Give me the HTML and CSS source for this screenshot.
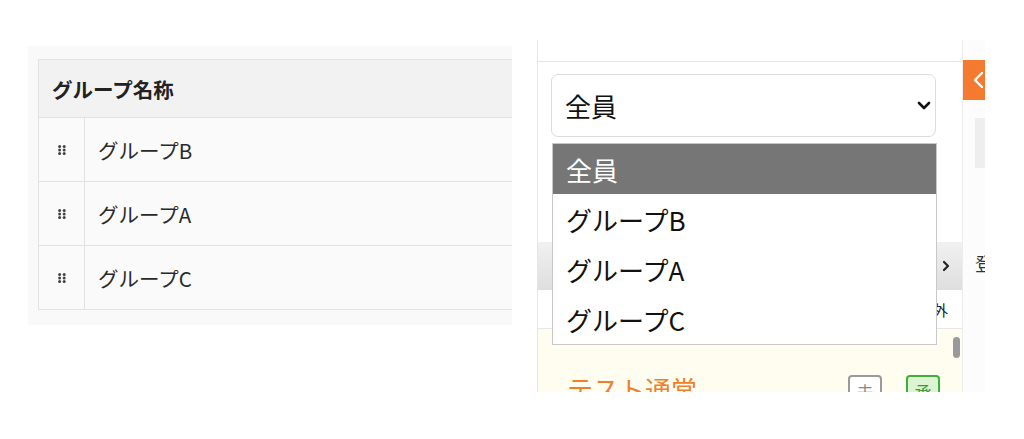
FILE: index.html
```html
<!DOCTYPE html>
<html lang="ja">
<head>
<meta charset="utf-8">
<title>グループ</title>
<link rel="stylesheet" href="styles.css">
</head>
<body>
<div class="stage">
  <section class="groups">
    <div class="gtable">
      <div class="ghead">グループ名称</div>
      <div class="grow">
        <span class="handle"><svg width="8" height="10" viewBox="0 0 8 10"><g fill="#444"><circle cx="1.6" cy="1.6" r="1.5"/><circle cx="6.2" cy="1.6" r="1.5"/><circle cx="1.6" cy="5" r="1.5"/><circle cx="6.2" cy="5" r="1.5"/><circle cx="1.6" cy="8.4" r="1.5"/><circle cx="6.2" cy="8.4" r="1.5"/></g></svg></span>
        <span class="gname">グループB</span>
      </div>
      <div class="grow">
        <span class="handle"><svg width="8" height="10" viewBox="0 0 8 10"><g fill="#444"><circle cx="1.6" cy="1.6" r="1.5"/><circle cx="6.2" cy="1.6" r="1.5"/><circle cx="1.6" cy="5" r="1.5"/><circle cx="6.2" cy="5" r="1.5"/><circle cx="1.6" cy="8.4" r="1.5"/><circle cx="6.2" cy="8.4" r="1.5"/></g></svg></span>
        <span class="gname">グループA</span>
      </div>
      <div class="grow">
        <span class="handle"><svg width="8" height="10" viewBox="0 0 8 10"><g fill="#444"><circle cx="1.6" cy="1.6" r="1.5"/><circle cx="6.2" cy="1.6" r="1.5"/><circle cx="1.6" cy="5" r="1.5"/><circle cx="6.2" cy="5" r="1.5"/><circle cx="1.6" cy="8.4" r="1.5"/><circle cx="6.2" cy="8.4" r="1.5"/></g></svg></span>
        <span class="gname">グループC</span>
      </div>
    </div>
  </section>

  <section class="panel">
    <div class="main">
      <div class="selwrap">
        <div class="select">
          <span>全員</span>
          <svg width="14" height="9" viewBox="0 0 14 9"><path d="M2 2 L7 7 L12 2" fill="none" stroke="#111" stroke-width="2.6" stroke-linecap="round" stroke-linejoin="round"/></svg>
        </div>
      </div>
      <div class="bar">
        <svg width="8" height="12" viewBox="0 0 8 12"><path d="M2 2 L6 6 L2 10" fill="none" stroke="#222" stroke-width="2.2" stroke-linecap="round" stroke-linejoin="round"/></svg>
      </div>
      <div class="exrow"><span>除外</span></div>
      <div class="yellow">
        <span class="title">テスト通常</span>
        <div class="badges">
          <span class="badge grey">未</span>
          <span class="badge green">承</span>
        </div>
      </div>
    </div>
    <div class="side">
      <div class="tab">
        <svg width="14" height="20" viewBox="0 0 14 20"><path d="M11 3 L4 10 L11 17" fill="none" stroke="#fff" stroke-width="2.4" stroke-linecap="round" stroke-linejoin="round"/></svg>
      </div>
      <div class="sidebox"></div>
      <div class="sidetext">登</div>
    </div>
    <div class="thumb"></div>
    <ul class="dropdown">
      <li class="opt active">全員</li>
      <li class="opt">グループB</li>
      <li class="opt">グループA</li>
      <li class="opt">グループC</li>
    </ul>
  </section>
</div>
</body>
</html>
```

FILE: styles.css
```css
* { box-sizing: border-box; }
html, body {
  margin: 0;
  padding: 0;
  background: #fff;
  font-family: "Noto Sans CJK JP", "Noto Sans", sans-serif;
}
.stage {
  display: flex;
  align-items: flex-start;
  width: 1024px;
  height: 439px;
  overflow: hidden;
}

/* left: group list */
.groups {
  margin-left: 28px;
  margin-top: 46px;
  width: 484px;
  height: 279px;
  background: #f9f9f9;
  padding: 13px 0 0 10px;
}
.gtable {
  border-left: 1px solid #e2e2e2;
  border-top: 1px solid #e2e2e2;
}
.ghead {
  height: 58px;
  background: #f2f2f2;
  border-bottom: 1px solid #e2e2e2;
  display: flex;
  align-items: center;
  padding-left: 13px;
  font-size: 20.5px;
  font-weight: 700;
  color: #222;
}
.grow {
  display: flex;
  height: 64px;
  border-bottom: 1px solid #e2e2e2;
  background: #fafafa;
}
.handle {
  width: 46px;
  border-right: 1px solid #e2e2e2;
  display: flex;
  align-items: center;
  justify-content: center;
  padding-left: 1px;
}
.gname {
  display: flex;
  align-items: center;
  padding-left: 13px;
  font-size: 20.5px;
  color: #2a2a2a;
}

/* right: panel */
.panel {
  position: relative;
  margin-left: 25px;
  margin-top: 40px;
  width: 448px;
  height: 352px;
  border-left: 1px solid #e6e6e6;
  display: flex;
  overflow: hidden;
}
.main {
  width: 424px;
  flex-shrink: 0;
  margin-top: 21px;
  border-top: 1px solid #e4e4e4;
  display: flex;
  flex-direction: column;
  overflow: hidden;
}
.main > * { flex-shrink: 0; }
.selwrap {
  padding: 12px 0 0 13px;
}
.select {
  width: 385px;
  height: 63px;
  border: 1px solid #dcdcdc;
  border-radius: 7px;
  background: #fff;
  display: flex;
  align-items: center;
  justify-content: space-between;
  padding: 0 4px 0 13px;
  font-size: 26px;
  color: #111;
}
.bar {
  margin-top: 105px;
  height: 48px;
  background: linear-gradient(#f1f1f1, #dedede);
  display: flex;
  align-items: center;
  justify-content: flex-end;
  padding-right: 12px;
}
.exrow {
  height: 39px;
  border-bottom: 1px solid #e6e6e6;
  display: flex;
  align-items: center;
  justify-content: flex-end;
  padding-right: 14px;
  font-size: 15px;
  color: #222;
}
.yellow {
  height: 80px;
  background: #fffdf0;
  display: flex;
  align-items: flex-start;
  padding: 44px 22px 0 29px;
}
.title {
  font-size: 26px;
  line-height: 1.2;
  color: #f07f2c;
}
.badges {
  margin-left: auto;
  display: flex;
  gap: 24px;
  margin-top: 2px;
}
.badge {
  width: 34px;
  height: 30px;
  border-radius: 4px;
  display: flex;
  justify-content: center;
  padding-top: 2px;
  font-size: 17px;
}
.badge.grey {
  border: 2px solid #9a9a9a;
  color: #888;
  background: #fff;
}
.badge.green {
  border: 2px solid #3fae3a;
  color: #3a9a34;
  background: #dcf4d2;
}

.side {
  width: 23px;
  flex-shrink: 0;
  border-left: 1px solid #ececec;
  background: #fcfcfc;
  padding-top: 20px;
  display: flex;
  flex-direction: column;
}
.tab {
  height: 40px;
  background: #f47a30;
  display: flex;
  align-items: center;
  padding-left: 8px;
}
.sidebox {
  margin: 18px 0 0 12px;
  height: 50px;
  background: #eeeeee;
}
.sidetext {
  margin: 82px 0 0 12px;
  font-size: 18px;
  color: #333;
  white-space: nowrap;
}

.thumb {
  position: absolute;
  left: 415px;
  top: 297px;
  width: 7px;
  height: 21px;
  border-radius: 4px;
  background: #9a9a9a;
}
.dropdown {
  position: absolute;
  left: 14px;
  top: 103px;
  width: 385px;
  margin: 0;
  padding: 0;
  list-style: none;
  border: 1px solid #c8c8c8;
  background: #fff;
}
.opt {
  height: 50px;
  display: flex;
  align-items: center;
  padding-left: 13px;
  font-size: 26px;
  color: #111;
}
.opt.active {
  background: #767676;
  color: #fff;
}
```
